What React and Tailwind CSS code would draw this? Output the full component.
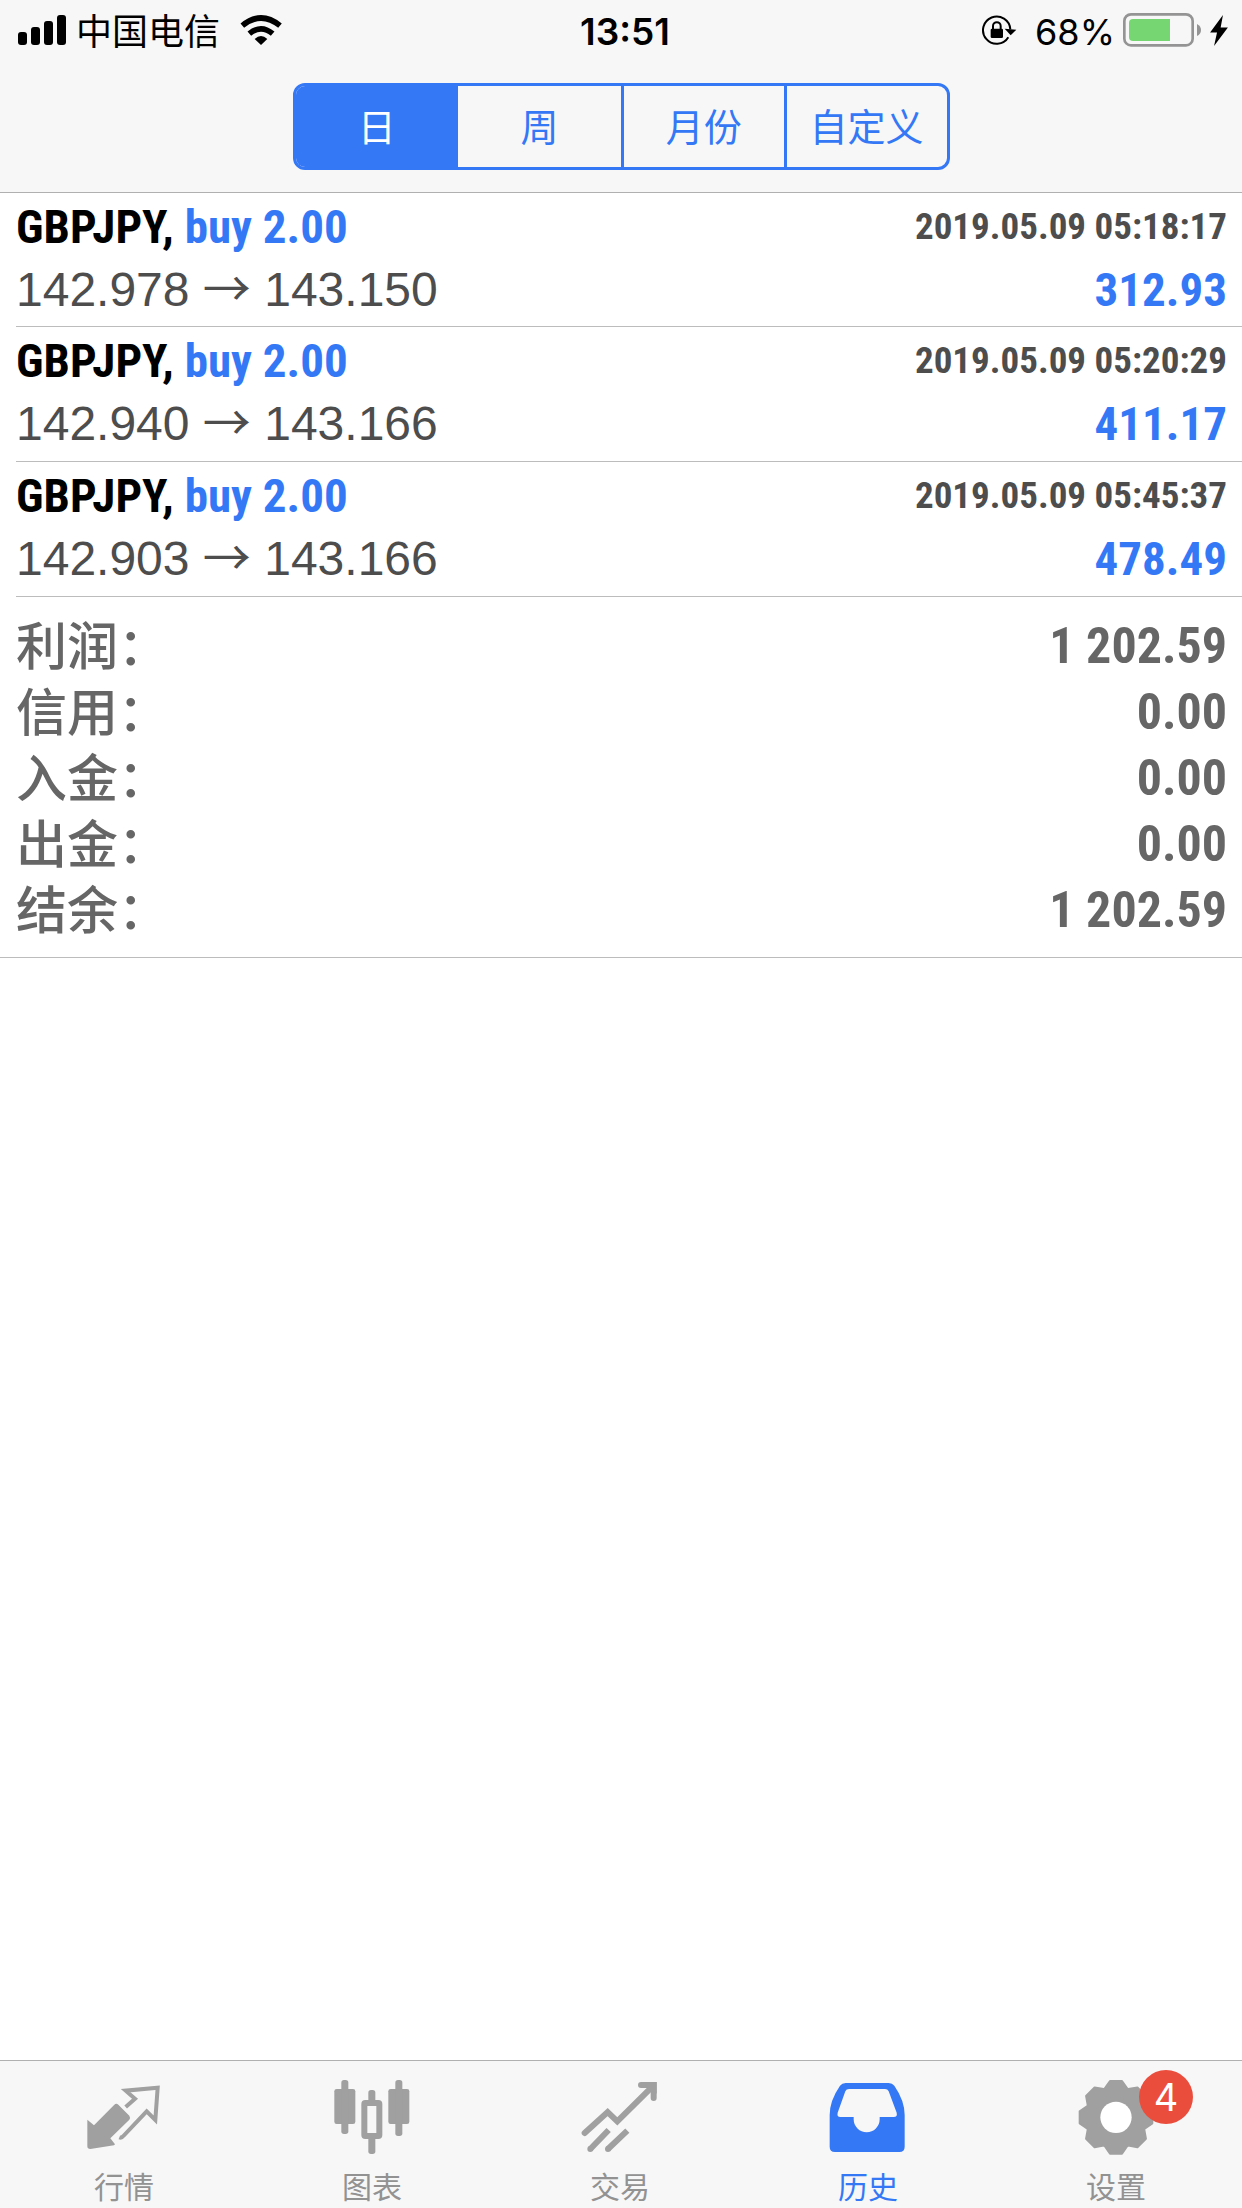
import React from "react";

const trades = [
  { symbol: "GBPJPY", side: "buy 2.00", open: "142.978", close: "143.150", time: "2019.05.09 05:18:17", profit: "312.93" },
  { symbol: "GBPJPY", side: "buy 2.00", open: "142.940", close: "143.166", time: "2019.05.09 05:20:29", profit: "411.17" },
  { symbol: "GBPJPY", side: "buy 2.00", open: "142.903", close: "143.166", time: "2019.05.09 05:45:37", profit: "478.49" },
];

const totals = [
  ["利润：", "1 202.59"],
  ["信用：", "0.00"],
  ["入金：", "0.00"],
  ["出金：", "0.00"],
  ["结余：", "1 202.59"],
];

const periods = ["日", "周", "月份", "自定义"];

const narrow = "font-['Roboto_Condensed','Roboto',sans-serif] font-bold";

function gearPath(cx, cy) {
  const pts = [];
  for (let k = 0; k < 8; k++) {
    const a = (k * Math.PI) / 4;
    for (const [x, y] of [[-34, -86], [-18, -109], [18, -109], [34, -86]]) {
      pts.push(`${(cx + x * Math.cos(a) - y * Math.sin(a)).toFixed(1)} ${(cy + x * Math.sin(a) + y * Math.cos(a)).toFixed(1)}`);
    }
  }
  return `M${pts.join("L")}Z`;
}

function QuotesIcon() {
  return (
    <svg viewBox="257 84 228 228" className="size-[76px] overflow-visible" fill="currentColor" aria-hidden="true">
      <path d="M261 209L281 226L342 164Q348 159 354 164L387 197Q391 203 387 209L330 265L344 283L341 286L270 297Q261 297 261 289Z" />
      <path d="M376 171L404 146L376 122L472 113L465 210L439 184L370 257Q364 265 357 262" fill="none" stroke="currentColor" strokeWidth="12" />
    </svg>
  );
}

function ChartIcon() {
  return (
    <svg viewBox="1004 84 228 228" className="size-[76px] overflow-visible" fill="currentColor" aria-hidden="true">
      <rect x="1005" y="117" width="63" height="105" rx="7" />
      <rect x="1026" y="90" width="21" height="162" rx="8" />
      <rect x="1167" y="117" width="63" height="105" rx="7" />
      <rect x="1188" y="90" width="21" height="168" rx="8" />
      <rect x="1107" y="120" width="21" height="42" rx="8" />
      <rect x="1107" y="255" width="21" height="57" rx="8" />
      <rect x="1095" y="159" width="45" height="99" rx="3" fill="none" stroke="currentColor" strokeWidth="18" />
    </svg>
  );
}

function TradeIcon() {
  return (
    <svg viewBox="127 84 228 228" className="size-[76px] overflow-visible" fill="none" stroke="currentColor" strokeWidth="18" aria-hidden="true">
      <path d="M135 249L204 186L233 214L338 110" strokeLinecap="round" />
      <path d="M304 105H342V144" strokeLinecap="round" />
      <path d="M316 96H351V131Z" fill="currentColor" stroke="none" />
      <path d="M152 297L207 240M205 297L263 242" />
      <circle cx="152" cy="297" r="9" fill="currentColor" stroke="none" />
      <circle cx="205" cy="297" r="9" fill="currentColor" stroke="none" />
    </svg>
  );
}

function HistoryIcon() {
  return (
    <svg viewBox="871 84 228 228" className="size-[76px] overflow-visible" fill="currentColor" fillRule="evenodd" aria-hidden="true">
      <path d="M918 99H1047Q1058 99 1064 107Q1095 152 1095 195V290Q1095 306 1079 306H886Q870 306 870 290V195Q870 152 901 107Q907 99 918 99ZM928 117Q920 117 917 124L894 188Q891 201 902 201H942V208A39 39 0 0 0 1020 208V201H1062Q1074 201 1071 188L1047 124Q1044 117 1036 117Z" />
    </svg>
  );
}

function SettingsIcon() {
  return (
    <svg viewBox="235 84 228 228" className="size-[76px] overflow-visible" fill="currentColor" aria-hidden="true">
      <path d={gearPath(349, 202)} stroke="currentColor" strokeWidth="6" strokeLinejoin="round" />
      <circle cx="349" cy="202" r="47" fill="#fff" />
    </svg>
  );
}

const tabs = [
  { label: "行情", Icon: QuotesIcon },
  { label: "图表", Icon: ChartIcon },
  { label: "交易", Icon: TradeIcon },
  { label: "历史", Icon: HistoryIcon, active: true },
  { label: "设置", Icon: SettingsIcon, badge: 4 },
];

function StatusBar() {
  return (
    <div className="grid grid-cols-3 items-center h-[60px] pl-[18px] pr-[14px] text-black">
      <div className="flex items-center">
        <svg viewBox="0 0 48 30" className="w-[48px] h-[30px] shrink-0" aria-label="信号">
          <rect x="0" y="17" width="9" height="13" rx="3" />
          <rect x="13" y="12" width="9" height="18" rx="3" />
          <rect x="26" y="6" width="9" height="24" rx="3" />
          <rect x="39" y="0" width="9" height="30" rx="3" />
        </svg>
        <span className="pt-[4px] ml-[10px] text-[36px] leading-[44px] whitespace-nowrap">中国电信</span>
        <svg viewBox="720 44 126 90" className="ml-[20px] w-[42px] h-[30px] shrink-0" fill="none" stroke="black" strokeWidth="17" aria-label="Wi-Fi">
          <path d="M727 76Q783 30 840 76" />
          <path d="M748 100Q783 71 818 100" />
          <path d="M764 116Q783 98 802 116L783 134Z" fill="black" stroke="none" />
        </svg>
      </div>
      <time className="pt-[4px] pl-[4px] text-center text-[37px] leading-[44px] font-semibold">13:51</time>
      <div className="flex items-center justify-end">
        <svg viewBox="486 42 108 96" className="w-[36px] h-[32px]" aria-label="方向锁定">
          <path d="M574 88A41 41 0 1 0 568 112" fill="none" stroke="black" strokeWidth="6" />
          <path d="M557 86L592 89L575 106Z" />
          <rect x="515" y="86" width="37" height="28" rx="4" />
          <path d="M522 88V78A11 11 0 0 1 545 78V88" fill="none" stroke="black" strokeWidth="6" />
        </svg>
        <span className="pt-[4px] ml-[18px] text-[36px] leading-[44px]">68%</span>
        <svg viewBox="906 39 234 102" className="ml-[8px] w-[78px] h-[34px]" aria-label="电池">
          <rect x="910" y="43" width="205" height="93" rx="20" fill="none" stroke="#949494" strokeWidth="8" />
          <path d="M936 57H1047V123H936Q924 123 924 111V69Q924 57 936 57Z" fill="#76d672" />
          <path d="M1128 72Q1140 78 1140 90T1128 108Z" fill="#949494" />
        </svg>
        <svg viewBox="1167 44 54 94" className="ml-[9px] w-[18px] h-[31px]" aria-label="充电中">
          <path d="M1206 44L1167 97H1188L1179 138L1221 82H1199Z" />
        </svg>
      </div>
    </div>
  );
}

function PeriodPicker() {
  return (
    <div className="flex justify-center pt-[23px] pb-[22px]">
      <div className="grid grid-cols-4 w-[657px] max-w-full h-[87px] rounded-[12px] border-[3px] border-[#3478f6] overflow-hidden text-[38px] leading-[44px]">
        {periods.map((p, i) => (
          <button
            key={p}
            type="button"
            aria-pressed={i === 0}
            className={
              i === 0
                ? "bg-[#3478f6] text-white"
                : i === 1
                  ? "text-[#3478f6]"
                  : "text-[#3478f6] border-l-[3px] border-[#3478f6]"
            }
          >
            {p}
          </button>
        ))}
      </div>
    </div>
  );
}

export default function App() {
  return (
    <div className="min-h-screen flex flex-col bg-white font-[Inter,'Noto_Sans_CJK_SC',sans-serif]">
      <header className="bg-[#f7f7f7] border-b border-[#b0b0b0]">
        <StatusBar />
        <PeriodPicker />
      </header>

      <main className="flex-1">
        <ul>
          {trades.map((t) => (
            <li key={t.time} className="ml-[16px] pr-[15px] pt-[2px] h-[135px] first:h-[134px] border-b border-[#bcbcbc]">
              <div className={`flex items-center justify-between h-[64px] ${narrow}`}>
                <p className="text-[47px] leading-[64px] text-black whitespace-nowrap">
                  {t.symbol}, <span className="text-[#3478f6]">{t.side}</span>
                </p>
                <time className="text-[37px] leading-[64px] text-[#4d4d4d] whitespace-nowrap">{t.time}</time>
              </div>
              <div className="flex items-center justify-between h-[62px]">
                <p className="font-['Liberation_Sans',sans-serif] text-[48px] leading-[62px] text-[#4d4d4d] whitespace-nowrap">
                  {t.open} <span className="font-['Noto_Sans_CJK_SC',sans-serif] leading-none">→</span> {t.close}
                </p>
                <p className={`text-[47px] leading-[62px] text-[#3478f6] ${narrow}`}>{t.profit}</p>
              </div>
            </li>
          ))}
        </ul>

        <dl className="pl-[16px] pr-[15px] pt-[16px] pb-[14px] border-b border-[#bcbcbc] text-[#666666]">
          {totals.map(([label, value]) => (
            <div key={label} className="flex items-center justify-between h-[66px]">
              <dt className="pb-[6px] font-['Noto_Sans_CJK_SC',sans-serif] text-[51px] leading-[66px] font-medium">{label}</dt>
              <dd className={`text-[50px] leading-[66px] ${narrow}`}>{value}</dd>
            </div>
          ))}
        </dl>
      </main>

      <nav className="grid grid-cols-5 pr-[2px] bg-[#f7f7f7] border-t border-[#b0b0b0]">
        {tabs.map(({ label, Icon, active, badge }) => (
          <a
            key={label}
            href="#"
            aria-current={active ? "page" : undefined}
            className={
              active
                ? "flex flex-col items-center pt-[17px] text-[#3478f6]"
                : "flex flex-col items-center pt-[17px] text-[#929292]"
            }
          >
            <span className={active ? "relative" : "relative text-[#a0a0a0]"}>
              <Icon />
              {badge && (
                <span className="absolute -top-[8px] left-[61px] flex items-center justify-center size-[54px] rounded-full bg-[#eb4d3d] text-white text-[38px] leading-[44px]">
                  {badge}
                </span>
              )}
            </span>
            <span className="mt-[12px] h-[42px] text-[30px] leading-[42px]">{label}</span>
          </a>
        ))}
      </nav>
    </div>
  );
}
